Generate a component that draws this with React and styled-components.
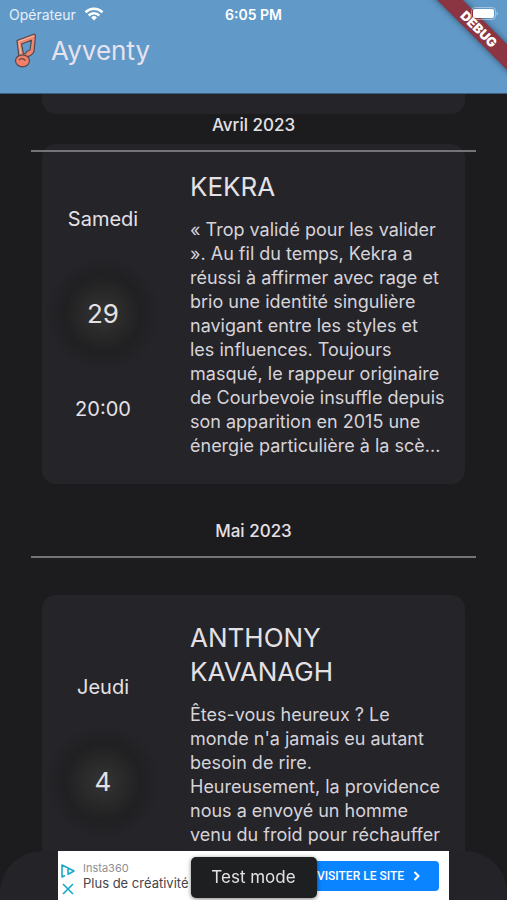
import styled, { createGlobalStyle } from "styled-components";

const events = [
  {
    day: "Samedi",
    date: "29",
    time: "20:00",
    title: "KEKRA",
    text: "« Trop validé pour les valider ». Au fil du temps, Kekra a réussi à affirmer avec rage et brio une identité singulière navigant entre les styles et les influences. Toujours masqué, le rappeur originaire de Courbevoie insuffle depuis son apparition en 2015 une énergie particulière à la scè...",
  },
  {
    day: "Jeudi",
    date: "4",
    time: "",
    title: "ANTHONY KAVANAGH",
    text: "Êtes-vous heureux ? Le monde n'a jamais eu autant besoin de rire. Heureusement, la providence nous a envoyé un homme venu du froid pour réchauffer",
  },
];

function EventCard({ event, tucked }) {
  return (
    <Card $tucked={tucked}>
      <When>
        <Day>{event.day}</Day>
        <Glow>{event.date}</Glow>
        <Day>{event.time}</Day>
      </When>
      <Details>
        <Title>{event.title}</Title>
        <Para>{event.text}</Para>
      </Details>
    </Card>
  );
}

function App() {
  return (
    <Screen>
      <GlobalStyle />
      <Header>
        <StatusBar>
          <Carrier>
            Opérateur
            <svg width="20" height="14" viewBox="0 0 20 14" fill="none" stroke="#fff">
              <path d="M1.5 5.2a12.2 12.2 0 0 1 17 0" strokeWidth="2.6" />
              <path d="M4.7 8.5a7.6 7.6 0 0 1 10.6 0" strokeWidth="2.5" />
              <path d="M10 13.4 7.1 10.5a4.2 4.2 0 0 1 5.8 0z" fill="#fff" stroke="none" />
            </svg>
          </Carrier>
          <Clock>6:05 PM</Clock>
          <Battery>
            <svg width="28" height="14" viewBox="0 0 28 14">
              <rect x="1.5" y="0.5" width="24" height="12" rx="3.5" fill="none" stroke="#fff" strokeOpacity="0.4" />
              <rect x="3" y="2" width="21" height="9" rx="2" fill="#fff" />
              <path d="M26.5 4.5v4c1-.4 1.5-1.1 1.5-2s-.5-1.6-1.5-2z" fill="#fff" fillOpacity="0.4" />
            </svg>
          </Battery>
        </StatusBar>
        <Brand>
          <svg width="24" height="36" viewBox="0 0 24 36" strokeLinejoin="round">
            <path
              d="M3 7.5 20.5 1l1 1.5-1.500 16Q18 22.500 13 24l1 4-9-3.500z M7.500 11 17.500 7.200 16 17Q13 17.500 11.500 20.500L9.500 21z"
              fill="#f0866f"
              fillRule="evenodd"
              stroke="#54494d"
              strokeWidth="1.2"
            />
            <ellipse cx="8.5" cy="27.8" rx="7" ry="6" fill="#f47f68" stroke="#54494d" strokeWidth="1.2" />
            <path d="M4.5 8.5 19.5 3 M4.8 9.5 7 21" stroke="#f5c0ae" strokeWidth="1" fill="none" />
            <path d="M5 27q3-3 6.5.5" stroke="#54494d" strokeWidth="1.2" fill="none" />
          </svg>
          <h1>Ayventy</h1>
        </Brand>
        <Ribbon>DEBUG</Ribbon>
      </Header>
      <List>
        <CardEnd />
        <MonthBar $pinned>
          <h2>Avril 2023</h2>
        </MonthBar>
        <EventCard event={events[0]} tucked />
        <MonthBar>
          <h2>Mai 2023</h2>
        </MonthBar>
        <EventCard event={events[1]} />
      </List>
      <BottomSheet>
        <Ad>
          <AdIcons>
            <svg width="14" height="14" viewBox="0 0 14 14" fill="none" stroke="#17a9c9" strokeWidth="1.6">
              <path d="M4 11.5 1 13V1l12 6-6 3.2V5" strokeLinejoin="round" />
            </svg>
            <svg width="14" height="14" viewBox="0 0 14 14" fill="none" stroke="#17a9c9" strokeWidth="1.6">
              <path d="M2 2l10 10M12 2 2 12" />
            </svg>
          </AdIcons>
          <AdText>
            <small>Insta360</small>
            <span>Plus de créativité</span>
          </AdText>
          <AdLink href="#">
            VISITER LE SITE
            <svg width="8" height="10" viewBox="0 0 8 10" fill="none" stroke="#fff" strokeWidth="2">
              <path d="M1.5 1l4 4-4 4" />
            </svg>
          </AdLink>
        </Ad>
        <Toast role="status">Test mode</Toast>
      </BottomSheet>
    </Screen>
  );
}

const GlobalStyle = createGlobalStyle`
  * {
    box-sizing: border-box;
  }
  body {
    margin: 0;
    background: #1c1c1e;
    color: #e4e1e6;
    font-family: Inter, "Liberation Sans", sans-serif;
  }
  h1, h2, h3, p {
    margin: 0;
    font-weight: 400;
  }
  svg {
    display: block;
    flex: none;
  }
`;

const Screen = styled.div`
  display: flex;
  flex-direction: column;
  height: 100vh;
  overflow: hidden;
`;

const Header = styled.header`
  position: relative;
  flex: none;
  padding: 4px 9px 24px;
  background: #6199c8;
  border-bottom: 1px solid #3c5f80;
  overflow: hidden;
`;

const StatusBar = styled.div`
  display: grid;
  grid-template-columns: 1fr auto 1fr;
  align-items: center;
  height: 20px;
  color: #fff;
  font-size: 14px;
`;

const Carrier = styled.div`
  display: flex;
  align-items: center;
  gap: 8px;
  color: #e6f0fa;
`;

const Clock = styled.div`
  font-weight: 600;
`;

const Battery = styled.div`
  position: relative;
  z-index: 2;
  justify-self: end;
`;

const Brand = styled.div`
  display: flex;
  align-items: center;
  gap: 13px;
  height: 45px;
  padding: 8px 5px 0;

  h1 {
    color: #e6e2ee;
    font-size: 26px;
    line-height: 32px;
  }
`;

const Ribbon = styled.div`
  position: absolute;
  top: 20px;
  right: -32px;
  width: 120px;
  height: 18px;
  background: #8b3442;
  box-shadow: 0 0 6px rgba(0, 0, 0, 0.5);
  color: #fff;
  font-size: 13px;
  font-weight: 900;
  line-height: 18px;
  text-align: center;
  transform: rotate(45deg);
`;

const List = styled.main`
  flex: 1;
  overflow: hidden;
  padding: 0 42px;
`;

const CardEnd = styled.div`
  height: 20px;
  border-radius: 0 0 14px 14px;
  background: #252429;
`;

const MonthBar = styled.div`
  position: relative;
  display: flex;
  align-items: flex-end;
  justify-content: center;
  height: ${(props) => (props.$pinned ? "38px" : "74px")};
  margin: 0 -11px;
  padding-bottom: 14px;
  border-bottom: 2px solid #747476;

  h2 {
    font-size: 17px;
    font-weight: 500;
    line-height: 22px;
  }
`;

const Card = styled.article`
  display: flex;
  gap: 26px;
  margin-top: ${(props) => (props.$tucked ? "-8px" : "37px")};
  padding: 26px 20px 26px 0;
  border-radius: 14px;
  background: #252429;
`;

const When = styled.div`
  display: flex;
  flex: none;
  flex-direction: column;
  align-items: center;
  justify-content: center;
  gap: 25px;
  width: 122px;
`;

const Day = styled.div`
  height: 24px;
  font-size: 20px;
  line-height: 24px;
`;

const Glow = styled.div`
  width: 116px;
  height: 116px;
  border-radius: 50%;
  background: radial-gradient(closest-side, #343433, #202022 66%, #252429);
  font-size: 26px;
  line-height: 116px;
  text-align: center;
`;

const Details = styled.div`
  flex: 1;
  min-width: 0;
`;

const Title = styled.h3`
  margin-bottom: 14px;
  font-size: 26px;
  line-height: 34px;
`;

/* room for ten lines, so every card keeps the same height */
const Para = styled.p`
  min-height: 240px;
  color: #d6d3d9;
  font-size: 18px;
  line-height: 24px;
`;

const BottomSheet = styled.footer`
  position: fixed;
  right: 0;
  bottom: 0;
  left: 0;
  display: grid;
  justify-items: center;
  padding: 0 58px;
  border-radius: 42px 42px 0 0;
  background: #242328;
`;

const Ad = styled.div`
  grid-area: 1 / 1;
  display: flex;
  align-items: center;
  width: 100%;
  height: 49px;
  padding: 0 10px 0 3px;
  background: #fff;
`;

const AdIcons = styled.div`
  display: grid;
  gap: 4px;
  padding-top: 8px;
`;

const AdText = styled.div`
  display: flex;
  flex: 1;
  flex-direction: column;
  min-width: 0;
  padding-left: 8px;
  color: #45454a;
  font-size: 13px;
  line-height: 15px;
  white-space: nowrap;

  small {
    color: #8e8e93;
    font-size: 11px;
  }
`;

const AdLink = styled.a`
  display: flex;
  align-items: center;
  justify-content: flex-end;
  gap: 9px;
  width: 180px;
  height: 30px;
  padding-right: 18px;
  border-radius: 4px;
  background: #0a84ff;
  color: #fff;
  font-family: Roboto, sans-serif;
  font-size: 12px;
  font-weight: 500;
  text-decoration: none;
`;

const Toast = styled.div`
  grid-area: 1 / 1;
  align-self: center;
  width: 126px;
  margin-top: 3px;
  border-radius: 5px;
  background: #1e1f21;
  box-shadow: 0 1px 4px rgba(0, 0, 0, 0.5);
  color: #e4e1e6;
  font-size: 17px;
  line-height: 41px;
  text-align: center;
`;

export default App;
